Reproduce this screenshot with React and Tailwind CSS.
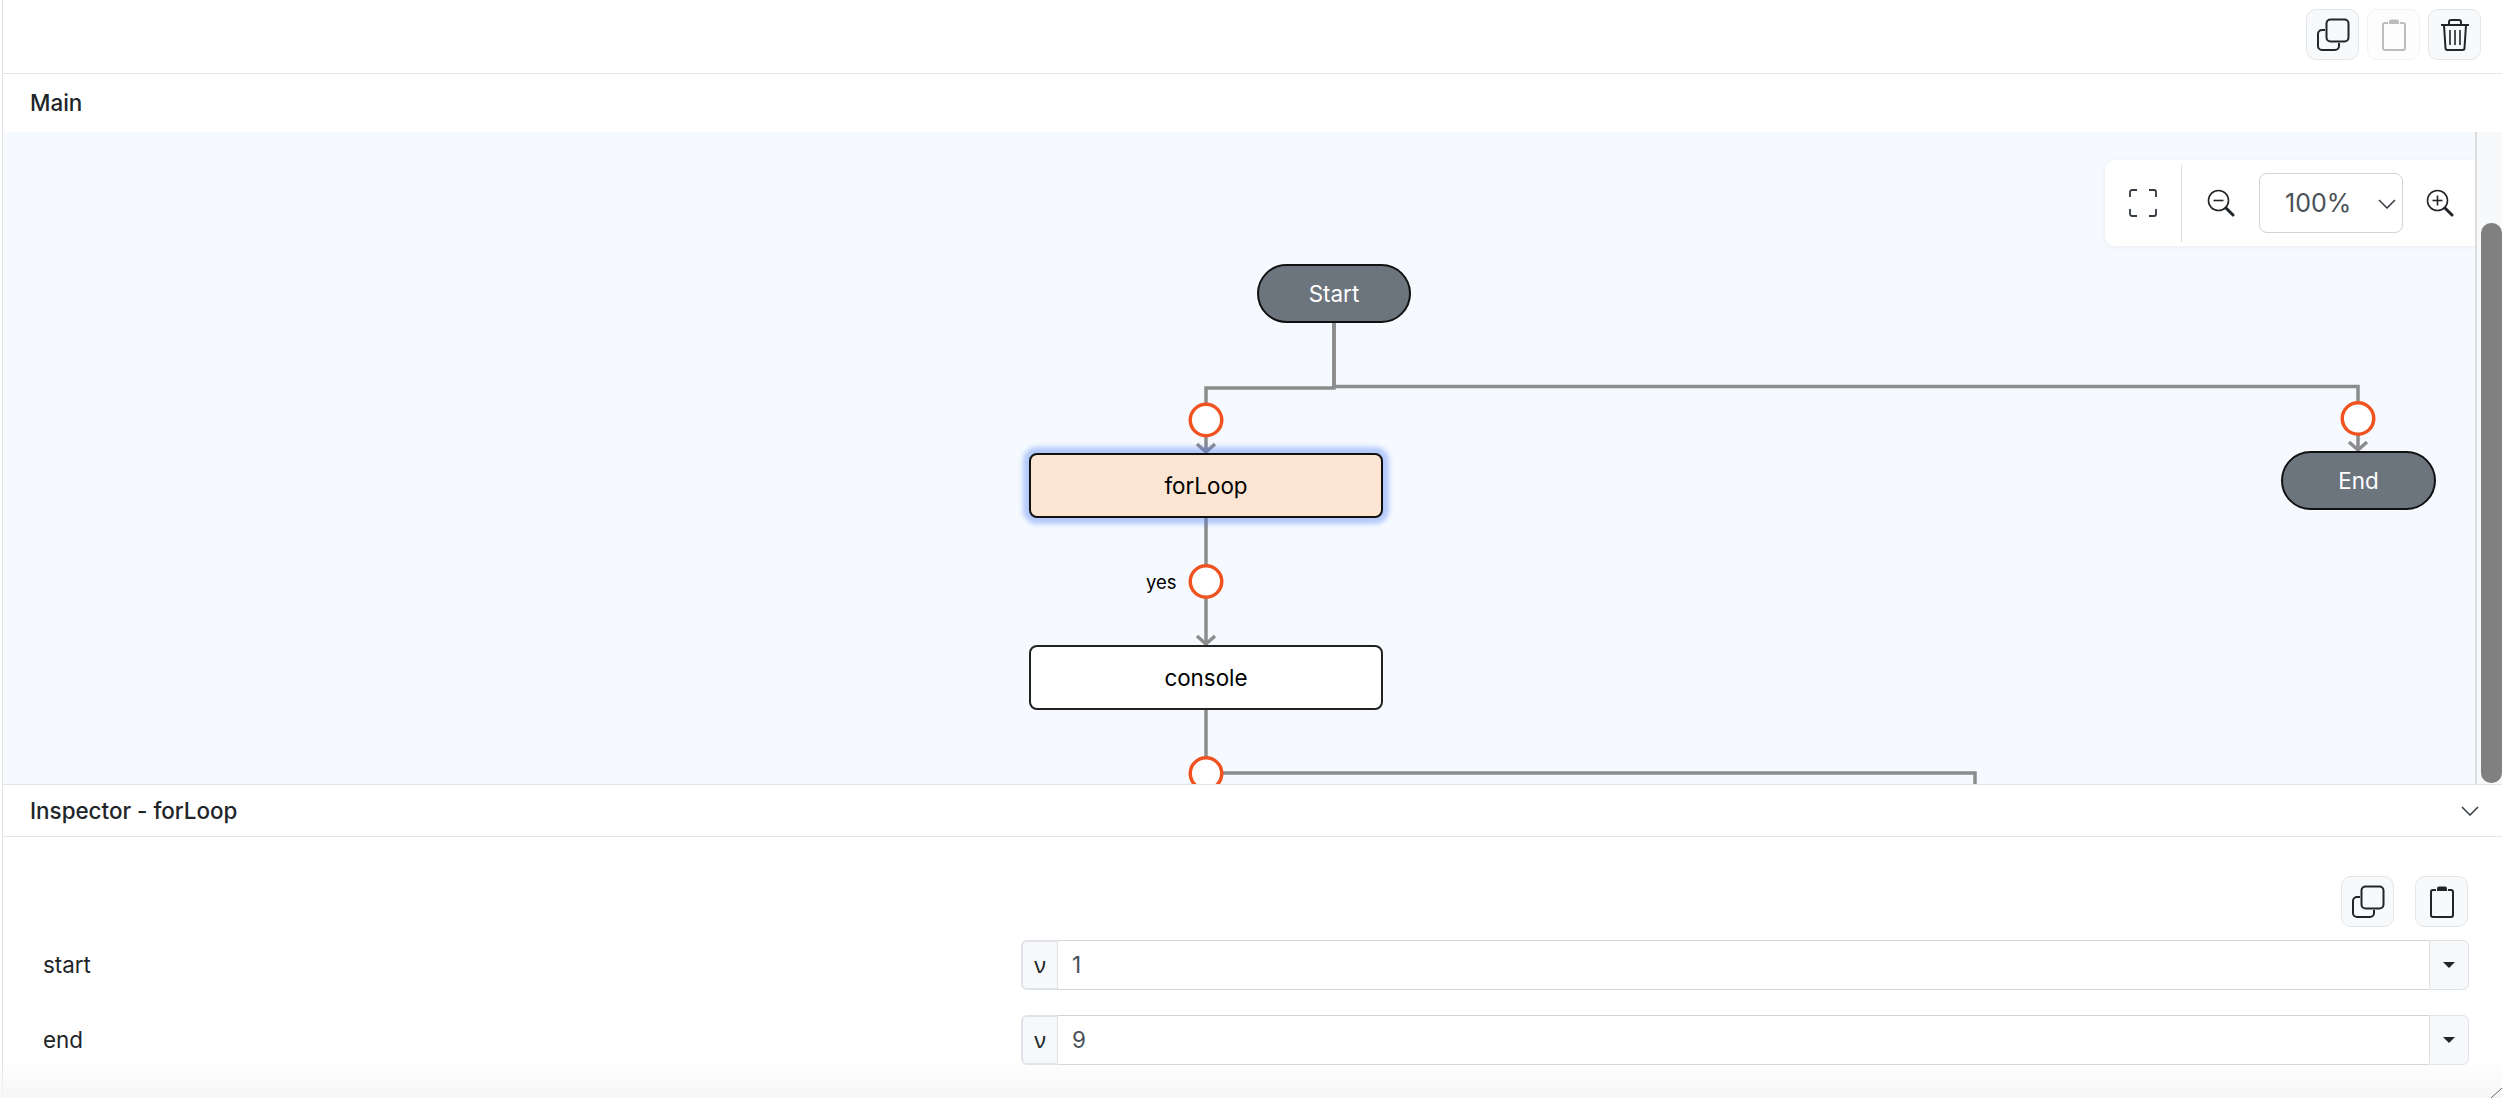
import React from 'react'

const CopyIcon = () => (
  <svg className="w-[34px] h-[34px]" viewBox="0 0 34 34" fill="none" stroke="#212529" strokeWidth="2">
    <rect x="10.5" y="1.5" width="22" height="22" rx="4" />
    <path d="M9 12H6a4 4 0 0 0-4 4v12a4 4 0 0 0 4 4h13a4 4 0 0 0 4-4v-3" />
  </svg>
)

const ClipboardIcon = ({ muted }) => (
  <svg className="w-[34px] h-[34px]" viewBox="0 0 34 34" fill="none" stroke={muted ? '#bdbdbd' : '#212529'} strokeWidth="2">
    <path d="M11 5H8a2 2 0 0 0-2 2v23a2 2 0 0 0 2 2h18a2 2 0 0 0 2-2V7a2 2 0 0 0-2-2h-3" />
    <path d="M12 6V3.5a2 2 0 0 1 2-2h6a2 2 0 0 1 2 2V6z" fill={muted ? '#bdbdbd' : '#212529'} stroke="none" />
  </svg>
)

const TrashIcon = () => (
  <svg className="w-[34px] h-[34px]" viewBox="0 0 34 34" fill="none" stroke="#212529" strokeWidth="2">
    <path d="M3 7h28M11 7V4a2 2 0 0 1 2-2h8a2 2 0 0 1 2 2v3" />
    <path d="M6 7l1.5 23a2 2 0 0 0 2 2h15a2 2 0 0 0 2-2L28 7" />
    <path d="M12 12v15M17 12v15M22 12v15" strokeWidth="1.6" />
  </svg>
)

const FullscreenIcon = () => (
  <svg className="w-[28px] h-[28px]" viewBox="0 0 28 28" fill="none" stroke="#343a40" strokeWidth="1.8">
    <path d="M1 8V3a2 2 0 0 1 2-2h5M20 1h5a2 2 0 0 1 2 2v5M27 20v5a2 2 0 0 1-2 2h-5M8 27H3a2 2 0 0 1-2-2v-5" />
  </svg>
)

const ZoomIcon = ({ plus }) => (
  <svg className="w-[28px] h-[28px]" viewBox="0 0 28 28" fill="none" stroke="#212529" strokeWidth="1.6">
    <circle cx="11.5" cy="11.5" r="10" />
    <path d="M6.5 11.5h10" />
    {plus && <path d="M11.5 6.5v10" />}
    <path d="M19 19l7 7" strokeWidth="3" strokeLinecap="round" />
  </svg>
)

const Chevron = ({ className }) => (
  <svg className={className} viewBox="0 0 18 10" fill="none" stroke="#343a40" strokeWidth="1.5">
    <path d="M1 1l8 8 8-8" />
  </svg>
)

const ToolButton = ({ children, muted }) => (
  <button className={`w-[53px] h-[51px] rounded-[10px] border flex items-center justify-center ${muted ? 'bg-[#fdfdfd] border-[#f1f3f5]' : 'bg-[#f8f9fa] border-[#e2e5e9]'}`}>
    {children}
  </button>
)

const Stop = ({ x, y }) => <circle cx={x} cy={y} r="15.75" fill="white" stroke="#f0531f" strokeWidth="3.5" />

const Arrow = ({ x, y }) => <path d={`M${x - 9} ${y - 9}l9 8 9-8`} fill="none" stroke="#8c8c8c" strokeWidth="3.5" />

const FieldRow = ({ label, value }) => (
  <div className="flex items-center h-[50px]">
    <div className="w-[1018px] pl-[40px] text-[22.4px] text-[#212529]">{label}</div>
    <div className="flex-1 flex h-[50px]">
      <div className="w-[37px] bg-[#f6f8fa] border-2 border-r border-[#dfe3e8] rounded-l-[6px] flex items-center justify-center text-[22.4px] text-[#212529] font-['Noto_Sans',sans-serif]">ν</div>
      <div className="flex-1 bg-white border-y border-[#ced4da] pl-[14px] flex items-center text-[22.4px] text-[#495057]">{value}</div>
      <div className="w-[40px] bg-[#f6f8fa] border border-[#dfe3e8] rounded-r-[6px] flex items-center justify-center">
        <div className="w-0 h-0 border-x-[6px] border-x-transparent border-t-[6px] border-t-[#212529]" />
      </div>
    </div>
  </div>
)

export default function App() {
  return (
    <div className="relative h-screen overflow-hidden bg-white pl-[2px] text-[#212529] font-['Inter','Liberation_Sans',sans-serif]">
      <div className="h-full flex flex-col border-l-[1.5px] border-[#dfe1e4]">
        {/* top toolbar */}
        <div className="h-[74px] shrink-0 border-b border-[#e3e4e6] flex items-start justify-end gap-2 pt-[9px] pr-[21px]">
          <ToolButton><CopyIcon /></ToolButton>
          <ToolButton muted><ClipboardIcon muted /></ToolButton>
          <ToolButton><TrashIcon /></ToolButton>
        </div>

        <div className="h-[58px] shrink-0 flex items-center pl-[27px] text-[22.4px] font-[450]">Main</div>

        {/* flow canvas */}
        <div className="flex-1 flex min-h-0 border-b border-[#e2e6ea]">
          <div className="relative flex-1 overflow-hidden bg-[#f6faff] border-r-2 border-[#dcdcdc]">
            <svg className="absolute left-0 top-0 w-[2472px] h-[652px]" viewBox="3 132 2472 652" fill="none">
              <g stroke="#8c8c8c" strokeWidth="3.5">
                <path d="M1334 323V388H1206V404" />
                <path d="M1334 323V386.5H2358V403" />
                <path d="M1206 436V453" />
                <path d="M2358 435V451" />
                <path d="M1206 518V565" />
                <path d="M1206 597V645" />
                <path d="M1206 710V757" />
                <path d="M1206 773H1975V790" />
              </g>
              <Arrow x={1206} y={453} />
              <Arrow x={1206} y={645} />
              <Arrow x={2358} y={451} />
              <Stop x={1206} y={420} />
              <Stop x={2358} y={418.5} />
              <Stop x={1206} y={581.5} />
              <Stop x={1206} y={773.5} />
            </svg>

            <div className="absolute left-[1254px] top-[132px] w-[154px] h-[59px] rounded-full bg-[#6c757d] border-2 border-[#111] text-white text-[22.4px] flex items-center justify-center">Start</div>
            <div className="absolute left-[2278px] top-[319px] w-[155px] h-[59px] rounded-full bg-[#6c757d] border-2 border-[#111] text-white text-[22.4px] flex items-center justify-center">End</div>
            <div className="absolute left-[1026px] top-[321px] w-[354px] h-[65px] rounded-[8px] bg-[#fce6d3] border-2 border-[#111] text-black text-[22.4px] flex items-center justify-center shadow-[0_0_5px_6px_rgba(70,120,245,0.38)]">forLoop</div>
            <div className="absolute left-[1026px] top-[513px] w-[354px] h-[65px] rounded-[8px] bg-white border-2 border-[#222] text-black text-[22.4px] flex items-center justify-center">console</div>
            <div className="absolute left-[1143px] top-[439px] text-[18.5px] leading-[22px] text-black">yes</div>

            {/* zoom controls */}
            <div className="absolute right-[-5px] top-[28px] w-[375px] h-[86px] bg-white rounded-[10px] shadow-[0_1px_6px_rgba(0,0,0,0.06)] flex items-center">
              <div className="w-[77px] h-[77px] border-r border-[#dcdee0] flex items-center justify-center">
                <FullscreenIcon />
              </div>
              <div className="w-[77px] flex justify-center"><ZoomIcon /></div>
              <div className="w-[144px] h-[60px] border border-[#ced4da] rounded-[8px] flex items-center pl-[25px] pt-[2px] text-[25px] text-[#495057]">
                <span>100%</span>
                <Chevron className="w-[18px] h-[10px] ml-[27px]" />
              </div>
              <div className="flex-1 flex justify-center pr-[4px]"><ZoomIcon plus /></div>
            </div>
          </div>

          {/* scrollbar */}
          <div className="w-[25px] shrink-0 bg-[#f8f9fb] pl-[4px] pt-[91px] pb-[1px]">
            <div className="h-full rounded-t-[10px] rounded-b-[10px] bg-[#808080]" />
          </div>
        </div>

        {/* inspector */}
        <div className="h-[52px] shrink-0 border-b border-[#e3e4e6] flex items-center justify-between pl-[27px] pr-[23px]">
          <span className="text-[22.4px] font-[450]">Inspector - forLoop</span>
          <Chevron className="w-[18px] h-[10px]" />
        </div>
        <div className="h-[261px] shrink-0 pt-[39px] pr-[33px]">
          <div className="flex justify-end gap-[21px] mb-[13px] pr-[1px]">
            <ToolButton><CopyIcon /></ToolButton>
            <ToolButton><ClipboardIcon /></ToolButton>
          </div>
          <div className="flex flex-col gap-[25px]">
            <FieldRow label="start" value="1" />
            <FieldRow label="end" value="9" />
          </div>
        </div>
      </div>

      {/* bottom fade and resize grip */}
      <div className="absolute left-0 right-0 bottom-0 h-[38px] pointer-events-none bg-gradient-to-b from-white/0 to-[#f6f6f6]" />
      <svg className="absolute right-0 bottom-0 w-[12px] h-[10px]" viewBox="0 0 12 10" fill="none" stroke="#666" strokeWidth="1">
        <path d="M1 10L12 0" />
      </svg>
    </div>
  )
}
